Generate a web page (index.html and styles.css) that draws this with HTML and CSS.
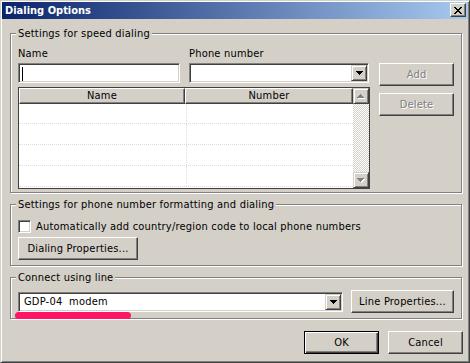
FILE: index.html
```html
<!DOCTYPE html>
<html>
<head>
<meta charset="utf-8">
<link rel="stylesheet" href="styles.css">
</head>
<body>
<div class="window">
  <div class="titlebar">
    <span class="title">Dialing Options</span>
    <div class="close">
      <svg width="8" height="7" viewBox="0 0 8 7" shape-rendering="crispEdges"><path d="M0 0h2v1H0zM6 0h2v1H6zM1 1h2v1H1zM5 1h2v1H5zM2 2h4v1H2zM3 3h2v1H3zM2 4h4v1H2zM1 5h2v1H1zM5 5h2v1H5zM0 6h2v1H0zM6 6h2v1H6z" fill="#000"/></svg>
    </div>
  </div>
  <div class="client">
    <fieldset class="group g1">
      <legend>Settings for speed dialing</legend>
      <div class="speed">
        <div class="speed-main">
          <div class="fields">
            <div class="field name-field">
              <div class="label">Name</div>
              <div class="edit"><span class="caret"></span></div>
            </div>
            <div class="field phone-field">
              <div class="label">Phone number</div>
              <div class="combo">
                <div class="combo-text"></div>
                <div class="drop"><svg width="7" height="4" viewBox="0 0 7 4" shape-rendering="crispEdges"><path d="M0 0h7v1H0zM1 1h5v1H1zM2 2h3v1H2zM3 3h1v1H3z" fill="#000"/></svg></div>
              </div>
            </div>
          </div>
          <div class="list">
            <div class="list-main">
              <div class="header">
                <div class="hcell c1">Name</div>
                <div class="hcell c2">Number</div>
              </div>
              <div class="rows">
                <div class="row first"><div class="cell c1"></div><div class="cell c2"></div></div>
                <div class="row"><div class="cell c1"></div><div class="cell c2"></div></div>
                <div class="row"><div class="cell c1"></div><div class="cell c2"></div></div>
                <div class="row"><div class="cell c1"></div><div class="cell c2"></div></div>
              </div>
            </div>
            <div class="scrollbar">
              <div class="sbtn"><svg width="8" height="5" viewBox="0 0 8 5" shape-rendering="crispEdges"><path d="M4 1h1v1H4zM3 2h3v1H3zM2 3h5v1H2zM1 4h7v1H1z" fill="#fff"/><path d="M3 0h1v1H3zM2 1h3v1H2zM1 2h5v1H1zM0 3h7v1H0z" fill="#808080"/></svg></div>
              <div class="track"></div>
              <div class="sbtn"><svg width="8" height="5" viewBox="0 0 8 5" shape-rendering="crispEdges"><path d="M1 1h7v1H1zM2 2h5v1H2zM3 3h3v1H3zM4 4h1v1H4z" fill="#fff"/><path d="M0 0h7v1H0zM1 1h5v1H1zM2 2h3v1H2zM3 3h1v1H3z" fill="#808080"/></svg></div>
            </div>
          </div>
        </div>
        <div class="side-buttons">
          <div class="btn disabled">Add</div>
          <div class="btn disabled">Delete</div>
        </div>
      </div>
    </fieldset>

    <fieldset class="group g2">
      <legend>Settings for phone number formatting and dialing</legend>
      <div class="check-row">
        <span class="checkbox"></span>
        <span class="check-label">Automatically add country/region code to local phone numbers</span>
      </div>
      <div class="btn dial-btn">Dialing Properties...</div>
    </fieldset>

    <fieldset class="group g3">
      <legend>Connect using line</legend>
      <div class="line-row">
        <div class="combo line-combo">
          <div class="combo-text">GDP-04  modem</div>
          <div class="drop"><svg width="7" height="4" viewBox="0 0 7 4" shape-rendering="crispEdges"><path d="M0 0h7v1H0zM1 1h5v1H1zM2 2h3v1H2zM3 3h1v1H3z" fill="#000"/></svg></div>
        </div>
        <div class="btn line-btn">Line Properties...</div>
      </div>
    </fieldset>

    <div class="dialog-buttons">
      <div class="btn default">OK</div>
      <div class="btn">Cancel</div>
    </div>
  </div>
  <div class="highlight"></div>
</div>
</body>
</html>
```
FILE: styles.css
```css
html, body {
  margin: 0;
  padding: 0;
  background: #d4d0c8;
}
body {
  font-family: "DejaVu Sans Condensed", "DejaVu Sans", sans-serif;
  font-size: 11px;
  line-height: 13px;
  letter-spacing: 0.2px;
  color: #000;
}
.window {
  position: relative;
  width: 470px;
  height: 363px;
  box-sizing: border-box;
  background: #d4d0c8;
  border: 1px solid;
  border-color: #d4d0c8 #404040 #404040 #d4d0c8;
  box-shadow: inset 1px 1px #fff, inset -1px -1px #808080;
  padding: 1px;
  display: flex;
  flex-direction: column;
}
.titlebar {
  height: 17px;
  display: flex;
  align-items: flex-start;
  justify-content: space-between;
  padding: 0 2px 0 3px;
  background: linear-gradient(to right, #0a246a, #a6caf0);
}
.title {
  color: #fff;
  font-weight: bold;
  line-height: 17px;
  letter-spacing: 0;
}
.close {
  margin-top: 1px;
  width: 16px;
  height: 14px;
  box-sizing: border-box;
  background: #d4d0c8;
  border: 1px solid;
  border-color: #fff #404040 #404040 #fff;
  box-shadow: inset -1px -1px #808080;
  display: flex;
  align-items: center;
  justify-content: center;
  padding-right: 1px;
}
.client {
  display: flex;
  flex-direction: column;
  padding: 8px 6px 0 8px;
}
.group {
  margin: 0;
  min-width: 0;
  border: 1px solid #808080;
  box-shadow: inset 1px 1px #fff, 1px 1px #fff;
  padding: 7px 7px 3px 7px;
}
.group legend {
  padding: 0 2px;
  margin-left: -2px;
  line-height: 13px;
  background: #d4d0c8;
}
.g2 {
  margin-top: 5px;
  padding: 9px 7px 5px 7px;
}
.g3 {
  margin-top: 5px;
  padding: 6px 7px 5px 7px;
}
.speed {
  display: flex;
}
.speed-main {
  width: 352px;
}
.fields {
  display: flex;
  gap: 9px;
}
.label {
  line-height: 13px;
  margin-bottom: 3px;
}
.edit {
  height: 20px;
  box-sizing: border-box;
  background: #fff;
  border: 1px solid;
  border-color: #808080 #fff #fff #808080;
  box-shadow: inset 1px 1px #404040, inset -1px -1px #d4d0c8;
  padding: 3px 0 0 3px;
}
.name-field .edit {
  width: 162px;
}
.caret {
  display: block;
  width: 1px;
  height: 14px;
  background: #000;
}
.combo {
  height: 20px;
  box-sizing: border-box;
  background: #fff;
  border: 1px solid;
  border-color: #808080 #fff #fff #808080;
  box-shadow: inset 1px 1px #404040, inset -1px -1px #d4d0c8;
  padding: 1px;
  display: flex;
}
.phone-field .combo {
  width: 180px;
}
.combo-text {
  flex: 1;
  padding-left: 3px;
  line-height: 16px;
  white-space: pre;
  margin-left: 1px;
}
.drop {
  width: 16px;
  height: 16px;
  box-sizing: border-box;
  background: #d4d0c8;
  border: 1px solid;
  border-color: #d4d0c8 #404040 #404040 #d4d0c8;
  box-shadow: inset 1px 1px #fff, inset -1px -1px #808080;
  display: flex;
  align-items: center;
  justify-content: center;
}
.list {
  margin-top: 4px;
  height: 102px;
  box-sizing: border-box;
  border: 1px solid #404040;
  background: #fff;
  display: flex;
}
.list-main {
  flex: 1;
  display: flex;
  flex-direction: column;
}
.header {
  display: flex;
  height: 16px;
}
.hcell {
  box-sizing: border-box;
  background: #d4d0c8;
  border: 1px solid;
  border-color: #fff #404040 #404040 #fff;
  box-shadow: inset -1px -1px #808080;
  text-align: center;
  line-height: 13px;
}
.hcell.c1 { width: 166px; }
.hcell.c2 { width: 168px; }
.row {
  display: flex;
  height: 21px;
  box-sizing: border-box;
  border-bottom: 1px dotted #dcdcdc;
}
.row.first {
  height: 20px;
}
.cell.c1 {
  width: 167px;
  border-right: 1px dotted #dcdcdc;
}
.scrollbar {
  width: 16px;
  display: flex;
  flex-direction: column;
}
.sbtn {
  width: 16px;
  height: 16px;
  box-sizing: border-box;
  background: #d4d0c8;
  border: 1px solid;
  border-color: #d4d0c8 #404040 #404040 #d4d0c8;
  box-shadow: inset 1px 1px #fff, inset -1px -1px #808080;
  display: flex;
  align-items: center;
  justify-content: center;
}
.track {
  flex: 1;
  background: repeating-conic-gradient(#fff 0 25%, #d4d0c8 0 50%) 0 0 / 2px 2px;
}
.side-buttons {
  margin-left: 9px;
  margin-top: 16px;
  display: flex;
  flex-direction: column;
  gap: 7px;
}
.btn {
  width: 75px;
  height: 23px;
  box-sizing: border-box;
  background: #d4d0c8;
  border: 1px solid;
  border-color: #fff #404040 #404040 #fff;
  box-shadow: inset -1px -1px #808080;
  display: flex;
  align-items: center;
  justify-content: center;
  white-space: nowrap;
}
.btn.disabled {
  color: #808080;
  text-shadow: 1px 1px #fff;
}
.btn.default {
  border-color: #000;
  box-shadow: inset 1px 1px #fff, inset -1px -1px #404040, inset -2px -2px #808080;
}
.check-row {
  display: flex;
  align-items: center;
  gap: 5px;
  height: 13px;
}
.checkbox {
  width: 13px;
  height: 13px;
  box-sizing: border-box;
  background: #fff;
  border: 1px solid;
  border-color: #808080 #fff #fff #808080;
  box-shadow: inset 1px 1px #404040, inset -1px -1px #d4d0c8;
}
.dial-btn {
  margin-top: 4px;
  width: 120px;
}
.line-row {
  display: flex;
  align-items: center;
  gap: 8px;
  height: 23px;
}
.line-combo {
  width: 325px;
}
.line-btn {
  width: 103px;
}
.dialog-buttons {
  display: flex;
  justify-content: flex-end;
  gap: 9px;
  margin-top: 12px;
  margin-right: -1px;
}
.highlight {
  position: absolute;
  left: 14px;
  top: 311px;
  width: 116px;
  height: 7px;
  border-radius: 4px;
  background: #fe1565;
}
```
